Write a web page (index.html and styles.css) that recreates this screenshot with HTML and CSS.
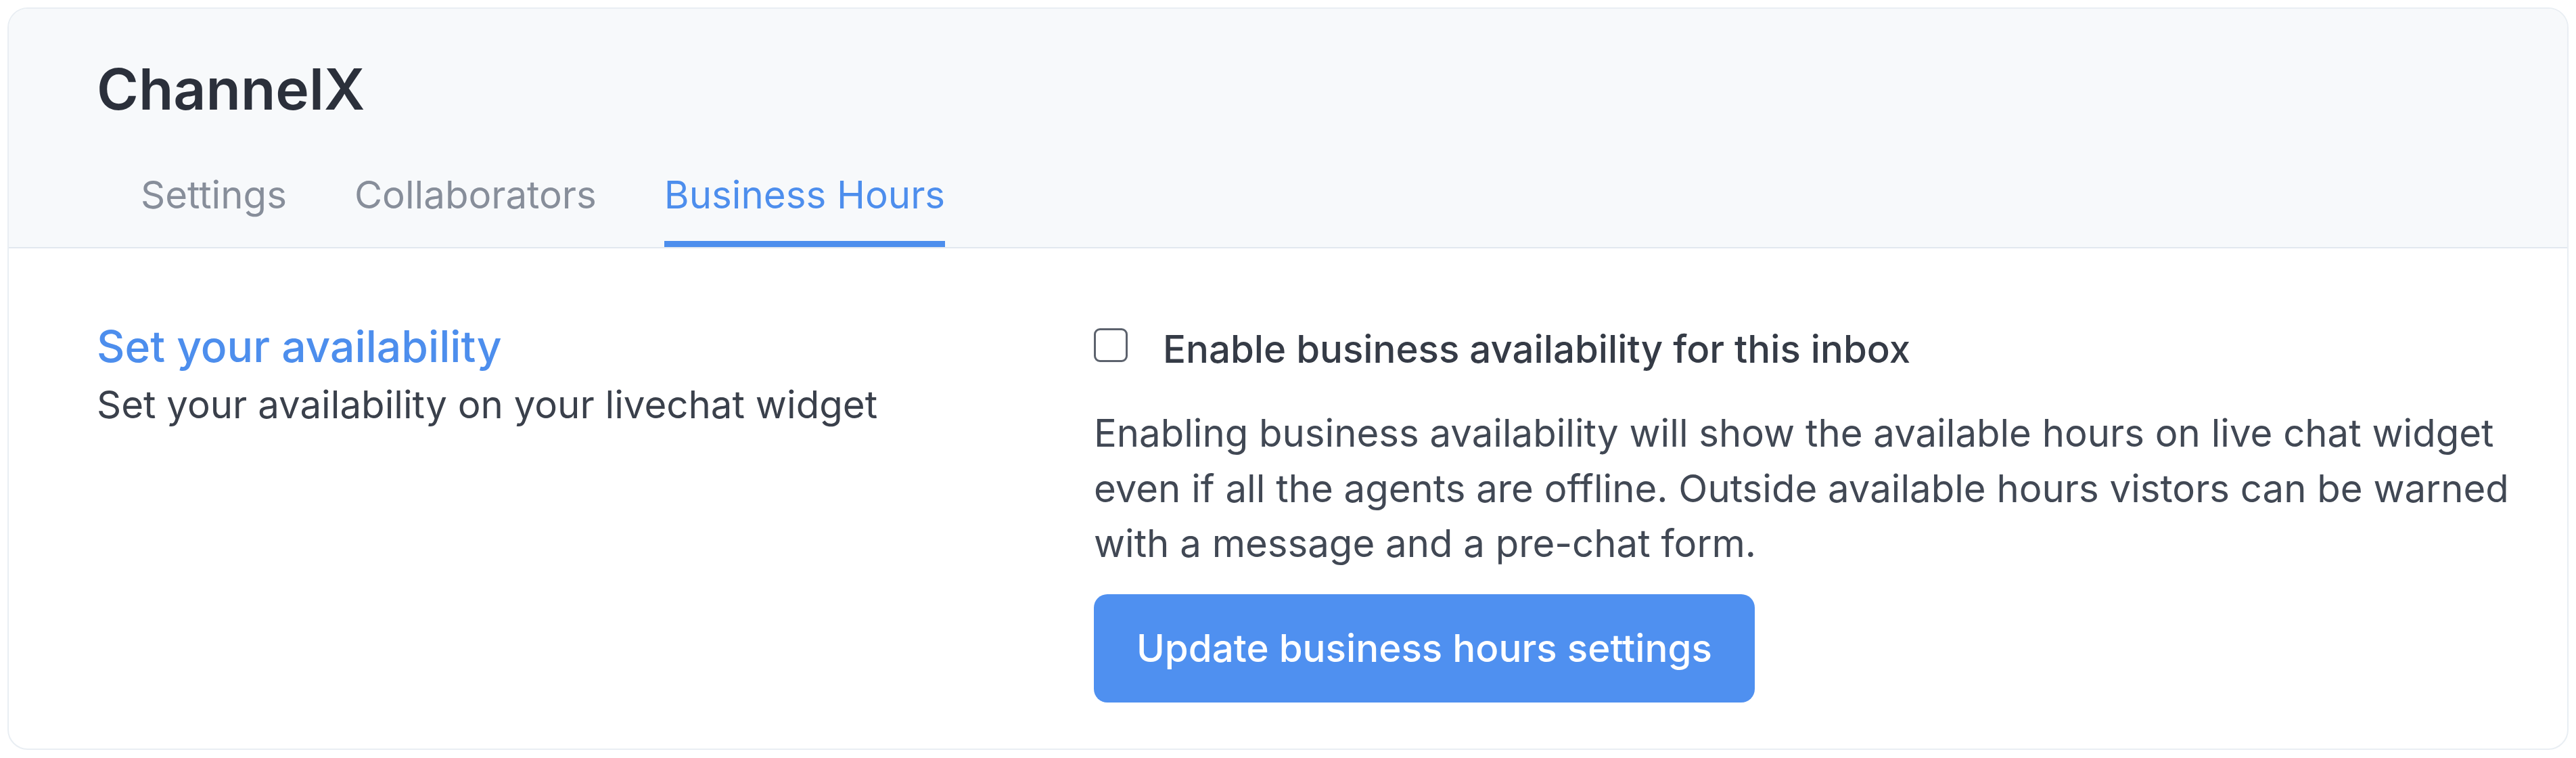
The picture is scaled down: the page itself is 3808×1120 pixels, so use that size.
FILE: index.html
```html
<!DOCTYPE html>
<html lang="en">
<head>
<meta charset="utf-8">
<title>ChannelX – Business Hours</title>
<link rel="stylesheet" href="styles.css">
</head>
<body>
<div class="card">
  <header class="header">
    <h1 class="title">ChannelX</h1>
    <nav class="tabs">
      <a class="tab">Settings</a>
      <a class="tab">Collaborators</a>
      <a class="tab active">Business Hours</a>
    </nav>
  </header>
  <section class="content">
    <div class="left">
      <h2 class="section-title">Set your availability</h2>
      <p class="section-sub">Set your availability on your livechat widget</p>
    </div>
    <div class="right">
      <label class="check-row">
        <span class="checkbox"></span>
        <span class="check-label">Enable business availability for this inbox</span>
      </label>
      <p class="help">Enabling business availability will show the available hours on live chat widget even if all the agents are offline. Outside available hours vistors can be warned with a message and a pre-chat form.</p>
      <button class="btn">Update business hours settings</button>
    </div>
  </section>
</div>
</body>
</html>
```
FILE: styles.css
```css
* { box-sizing: border-box; }
html, body { margin: 0; padding: 0; background: #ffffff; }
body {
  padding: 11px;
  font-family: Inter, "Noto Sans", "Liberation Sans", sans-serif;
}
.card {
  border: 2px solid #e9eef3;
  border-radius: 30px;
  overflow: hidden;
  background: #ffffff;
}
.header {
  background: #f7f9fb;
  padding: 67px 0 0 130px;
  border-bottom: 2px solid #e2e8ef;
}
.title {
  margin: 0;
  font-size: 84px;
  line-height: 104px;
  font-weight: 600;
  color: #2b303b;
}
.tabs {
  display: flex;
  gap: 100px;
  margin: 71px 0 0 65px;
}
.tab {
  font-size: 56.4px;
  line-height: 66px;
  color: #878e9a;
  padding-bottom: 35px;
  border-bottom: 9px solid transparent;
}
.tab.active {
  color: #4d8eed;
  border-bottom-color: #4d8eed;
}
.content {
  display: flex;
  padding: 108px 50px 68px 130px;
}
.left {
  width: 1474px;
  flex: none;
}
.section-title {
  margin: 0;
  font-size: 64.2px;
  line-height: 74px;
  font-weight: 500;
  color: #4d8eed;
}
.section-sub {
  margin: 19px 0 0;
  font-size: 56.4px;
  line-height: 60px;
  color: #3a404b;
}
.right {
  flex: 1;
  padding-top: 8px;
}
.check-row {
  display: flex;
  align-items: flex-start;
  gap: 52px;
}
.checkbox {
  width: 50px;
  height: 50px;
  margin-top: 2px;
  border: 3px solid #5c626d;
  border-radius: 9px;
  background: #ffffff;
  flex: none;
}
.check-label {
  font-size: 56.4px;
  line-height: 66px;
  font-weight: 500;
  color: #353b46;
}
.help {
  margin: 50px 0 0;
  font-size: 56.3px;
  line-height: 81.5px;
  color: #414854;
}
.btn {
  margin-top: 34px;
  display: block;
  border: none;
  background: #4f90f0;
  color: #ffffff;
  font-family: inherit;
  font-size: 56.5px;
  line-height: 68px;
  font-weight: 500;
  padding: 46px 63px;
  border-radius: 20px;
}
```
